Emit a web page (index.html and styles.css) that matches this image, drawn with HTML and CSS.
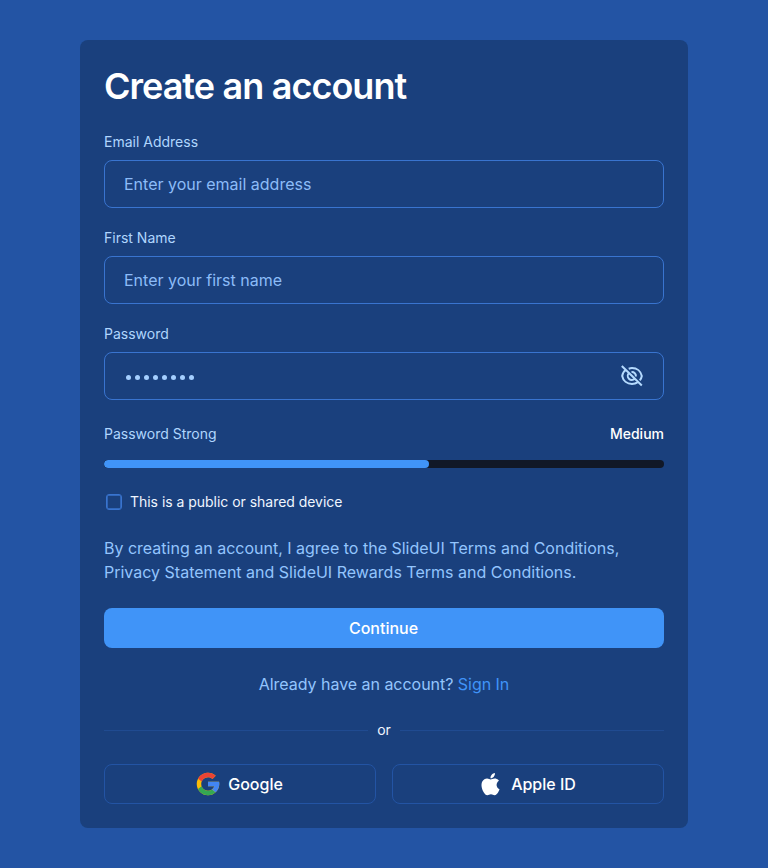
FILE: index.html
```html
<!DOCTYPE html>
<html lang="en">
<head>
<meta charset="utf-8">
<title>Create an account</title>
<link rel="stylesheet" href="styles.css">
</head>
<body>
<main class="card">
  <h1 class="title">Create an account</h1>
  <div class="field">
    <label class="label">Email Address</label>
    <div class="input">Enter your email address</div>
  </div>
  <div class="field">
    <label class="label">First Name</label>
    <div class="input">Enter your first name</div>
  </div>
  <div class="field">
    <label class="label">Password</label>
    <div class="input">
      <span class="dots"><i></i><i></i><i></i><i></i><i></i><i></i><i></i><i></i></span>
      <svg class="eye" width="24" height="24" viewBox="0 0 24 24" fill="none" stroke="currentColor" stroke-width="2"><path d="M1.800 2l20 19.500M5.900 5.800C3.900 7.200 2.600 9.400 2.200 12c.9 4.800 4.900 8 9.800 8 2.200 0 4.200-.7 5.900-1.900M8.700 4.700C9.700 4.300 10.800 4 12 4c4.900 0 8.900 3.200 9.800 8-.3 1.700-1 3.200-2 4.400M9 9a4 4 0 0 0 5.700 5.800M11.500 8.100a4 4 0 0 1 4.400 4.400"/></svg>
    </div>
  </div>
  <div class="strength">
    <span class="label">Password Strong</span><span class="level">Medium</span>
  </div>
  <div class="meter"><div class="meter-fill"></div></div>
  <label class="check"><span class="box"></span><span class="check-text">This is a public or shared device</span></label>
  <p class="terms">By creating an account, I agree to the SlideUI Terms and Conditions, Privacy Statement and SlideUI Rewards Terms and Conditions.</p>
  <button class="continue">Continue</button>
  <p class="signin">Already have an account? <a>Sign In</a></p>
  <div class="divider">or</div>
  <div class="socials">
    <button class="social">
      <svg width="24" height="24" viewBox="2.700 2.700 42.600 42.600"><path fill="#fbbc05" d="M43.611 20.083H42V20H24v8h11.303c-1.649 4.657-6.080 8-11.303 8-6.627 0-12-5.373-12-12s5.373-12 12-12c3.059 0 5.842 1.154 7.961 3.039l5.657-5.657C34.046 6.053 29.268 4 24 4 12.955 4 4 12.955 4 24s8.955 20 20 20 20-8.955 20-20c0-1.341-.138-2.650-.389-3.917z"/><path fill="#ea4335" d="M6.306 14.691l6.571 4.819C14.655 15.108 18.961 12 24 12c3.059 0 5.842 1.154 7.961 3.039l5.657-5.657C34.046 6.053 29.268 4 24 4 16.318 4 9.656 8.337 6.306 14.691z"/><path fill="#34a853" d="M24 44c5.166 0 9.860-1.977 13.409-5.192l-6.190-5.238C29.211 35.091 26.715 36 24 36c-5.202 0-9.619-3.317-11.283-7.946l-6.522 5.025C9.505 39.556 16.227 44 24 44z"/><path fill="#4285f4" d="M43.611 20.083H42V20H24v8h11.303a12.040 12.040 0 0 1-4.087 5.571l.003-.002 6.190 5.238C36.971 39.205 44 34 44 24c0-1.341-.138-2.650-.389-3.917z"/></svg>
      Google
    </button>
    <button class="social">
      <svg class="apple" width="24" height="24" viewBox="-0.500 -1.200 26 26" fill="currentColor"><path d="M12.152 6.896c-.948 0-2.415-1.078-3.960-1.040-2.040.027-3.910 1.183-4.961 3.014-2.117 3.675-.546 9.103 1.519 12.090 1.013 1.454 2.208 3.090 3.792 3.039 1.520-.065 2.090-.987 3.935-.987 1.831 0 2.350.987 3.960.948 1.637-.026 2.676-1.480 3.676-2.948 1.156-1.688 1.636-3.325 1.662-3.415-.039-.013-3.182-1.221-3.220-4.857-.026-3.040 2.480-4.494 2.597-4.559-1.429-2.090-3.623-2.324-4.390-2.376-2-.156-3.675 1.090-4.610 1.090zM15.530 3.830c.843-1.012 1.400-2.427 1.245-3.830-1.207.052-2.662.805-3.532 1.818-.780.896-1.454 2.338-1.273 3.714 1.338.104 2.715-.688 3.559-1.701"/></svg>
      Apple ID
    </button>
  </div>
</main>
</body>
</html>
```
FILE: styles.css
```css
* { box-sizing: border-box; }
body {
  margin: 0;
  padding: 40px 80px;
  min-height: 868px;
  background: #2354a4;
  font: 400 16px/24px Inter, sans-serif;
  color: #93c5fd;
}
.card {
  height: 788px;
  padding: 24px;
  border-radius: 8px;
  background: #1a407d;
}
.title {
  margin: 0 0 24px;
  font-size: 36px;
  line-height: 44px;
  font-weight: 600;
  letter-spacing: -1px;
  word-spacing: 0.500px;
  color: #fff;
}
.field { margin-bottom: 20px; }
.label {
  display: block;
  font-size: 14px;
  line-height: 20px;
  color: #b0d6fe;
}
.input {
  display: flex;
  align-items: center;
  justify-content: space-between;
  height: 48px;
  margin-top: 8px;
  padding: 0 19px;
  border: 1px solid #3974cf;
  border-radius: 8px;
  color: #8cbcf8;
}
.dots { display: flex; gap: 4px; padding: 2px 0 0 2px; }
.dots i { width: 5px; height: 5px; border-radius: 50%; background: #a5cfff; }
.eye { color: #b5dafe; }
.strength {
  display: flex;
  justify-content: space-between;
  margin-top: 24px;
}
.level { font-size: 14px; line-height: 20px; font-weight: 500; color: #fff; }
.meter {
  height: 8px;
  margin-top: 16px;
  border-radius: 4px;
  overflow: hidden;
  background: #111827;
}
.meter-fill { width: 58%; height: 8px; border-radius: 4px; background: #4094f8; }
.check {
  display: flex;
  align-items: center;
  gap: 8px;
  margin-top: 24px;
  padding-left: 2px;
  font-size: 14px;
  line-height: 20px;
  color: #eff6ff;
}
.check-text { letter-spacing: -0.03px; }
.box { width: 16px; height: 16px; border: 1px solid #3974cf; box-shadow: inset 0 0 0 0.700px #3974cf; border-radius: 3px; }
.terms { margin: 24px 0; }
.continue {
  width: 100%;
  height: 40px;
  padding: 0 1px 0 0;
  border: 0;
  border-radius: 8px;
  background: #4094f8;
  color: #fff;
  font: 500 16px/24px Inter, sans-serif;
}
.signin { margin: 24px 0; text-align: center; letter-spacing: -0.03px; }
.signin a { color: #4094f8; }
.divider {
  display: flex;
  align-items: center;
  gap: 9px;
  font-size: 14px;
  line-height: 20px;
  color: #eff6ff;
}
.divider::before, .divider::after { content: ""; flex: 1; height: 1px; background: #204b91; }
.socials { display: flex; gap: 16px; margin-top: 24px; }
.social {
  flex: 1;
  display: flex;
  align-items: center;
  justify-content: center;
  gap: 8px;
  height: 40px;
  padding: 0 1px 0 0;
  border: 1px solid #2354a4;
  border-radius: 8px;
  background: none;
  color: #fff;
  font: 500 16px/24px Inter, sans-serif;
}
```
